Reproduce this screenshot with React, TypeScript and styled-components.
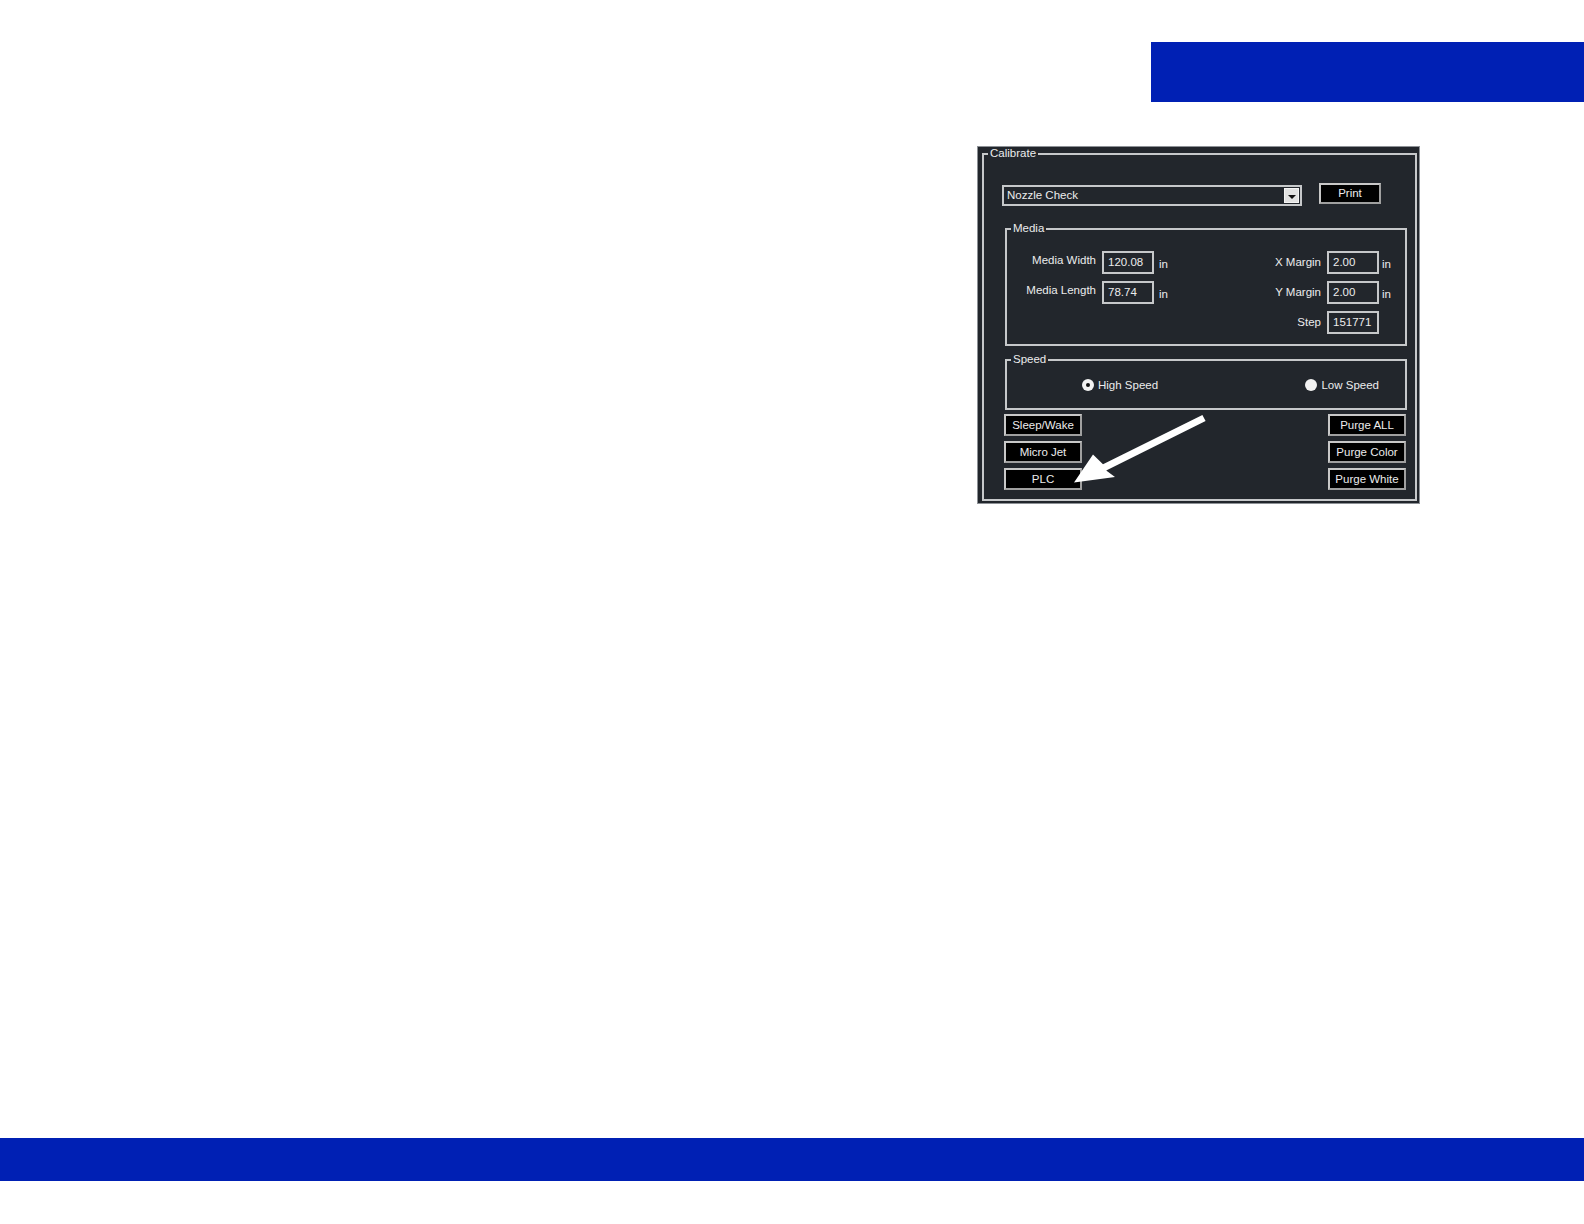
import React from 'react';
import styled, { createGlobalStyle } from 'styled-components';

const GlobalStyle = createGlobalStyle`
  html, body {
    margin: 0;
    padding: 0;
    background: #ffffff;
  }
  body {
    font-family: "Liberation Sans", Arial, sans-serif;
  }
`;

const PANEL_BG = '#22262c';
const LINE = '#c6c8ca';
const TEXT = '#ececec';
const BLUE = '#0020b4';

const Page = styled.div`
  width: 1584px;
  min-height: 1224px;
  display: flex;
  flex-direction: column;
`;

const TopBand = styled.header`
  padding-top: 42px;
  display: flex;
  justify-content: flex-end;
`;

const BlueTab = styled.div`
  width: 433px;
  height: 60px;
  background: ${BLUE};
`;

const Stage = styled.main`
  margin-top: 44px;
  padding-left: 977px;
`;

const Panel = styled.div`
  position: relative;
  width: 443px;
  box-sizing: border-box;
  padding: 0 2px 2px 4px;
  background: ${PANEL_BG};
  border: 1px solid #8d9196;
  font-size: 11.5px;
  line-height: 13px;
  color: ${TEXT};
`;

const GroupBox = styled.fieldset<{ $width?: number; $mt?: number; $ml?: number }>`
  margin: ${({ $mt }) => $mt ?? 0}px 0 0 ${({ $ml }) => $ml ?? 0}px;
  padding: 0;
  min-width: 0;
  width: ${({ $width }) => ($width ? `${$width}px` : 'auto')};
  box-sizing: border-box;
  border: 2px solid ${LINE};
`;

const Legend = styled.legend`
  margin-left: 4px;
  padding: 0 2px;
  font-size: 11.5px;
  line-height: 13px;
  color: ${TEXT};
`;

const GroupBody = styled.div<{ $pad: string }>`
  padding: ${({ $pad }) => $pad};
`;

const TopRow = styled.div`
  display: flex;
  align-items: flex-start;
  margin-top: 23px;
`;

const Select = styled.div`
  margin: 2px 0 0 -2px;
  width: 300px;
  height: 21px;
  box-sizing: border-box;
  border: 2px solid ${LINE};
  display: flex;
  align-items: center;
  justify-content: space-between;
  padding: 0 1px 0 3px;
`;

const SelectText = styled.span`
  color: ${TEXT};
`;

const SelectArrow = styled.span`
  width: 15px;
  height: 15px;
  box-sizing: border-box;
  background: #e2e2e2;
  border: 1px solid #f4f4f4;
  display: flex;
  align-items: center;
  justify-content: center;
  &::after {
    content: '';
    border-left: 4px solid transparent;
    border-right: 4px solid transparent;
    border-top: 4px solid #111;
    margin-top: 2px;
  }
`;

const PushButton = styled.div<{ $width: number }>`
  width: ${({ $width }) => $width}px;
  height: 22px;
  box-sizing: border-box;
  background: #000;
  border: 2px solid #c8c8c8;
  border-right-color: #a0a0a0;
  border-bottom-color: #a0a0a0;
  color: ${TEXT};
  display: flex;
  align-items: center;
  justify-content: center;
  white-space: nowrap;
`;

const PrintButton = styled(PushButton)`
  margin-left: 17px;
  height: 21px;
`;

const MediaBody = styled.div`
  display: flex;
  justify-content: space-between;
  padding: 16px 8px 10px 15px;
`;

const FieldGrid = styled.div<{ $labelWidth: number; $unitGap: number }>`
  display: grid;
  grid-template-columns: ${({ $labelWidth }) => $labelWidth}px 52px 12px;
  grid-auto-rows: 23px;
  column-gap: 6px;
  row-gap: 7px;
  align-items: center;
  & > :nth-child(3n) {
    margin-left: ${({ $unitGap }) => $unitGap - 6}px;
  }
`;

const FieldLabel = styled.span<{ $lift?: number }>`
  text-align: right;
  white-space: nowrap;
  padding-bottom: ${({ $lift }) => $lift ?? 0}px;
`;

const Field = styled.div`
  height: 23px;
  box-sizing: border-box;
  border: 2px solid ${LINE};
  padding: 0 4px;
  display: flex;
  align-items: center;
  color: ${TEXT};
`;

const Unit = styled.span`
  padding-top: 4px;
`;

const SpeedRow = styled.div`
  display: flex;
  align-items: center;
  padding: 12px 26px 16px 75px;
  height: 14px;
`;

const RadioOption = styled.label<{ $push?: boolean }>`
  display: flex;
  align-items: center;
  gap: 4px;
  margin-left: ${({ $push }) => ($push ? 'auto' : '0')};
`;

const RadioMark = styled.span<{ $checked?: boolean }>`
  width: 12px;
  height: 12px;
  border-radius: 50%;
  background: #f2f2f2;
  display: flex;
  align-items: center;
  justify-content: center;
  &::after {
    content: '';
    width: 4px;
    height: 4px;
    border-radius: 50%;
    background: ${({ $checked }) => ($checked ? '#111' : 'transparent')};
  }
`;

const ButtonColumns = styled.div`
  display: flex;
  justify-content: space-between;
  margin-top: 4px;
`;

const ButtonStack = styled.div`
  display: flex;
  flex-direction: column;
  gap: 5px;
`;

const ArrowOverlay = styled.svg`
  position: absolute;
  left: 0;
  top: 0;
  pointer-events: none;
`;

const Footer = styled.footer`
  margin-top: 634px;
  height: 43px;
  background: ${BLUE};
`;

const leftFields = [
  { label: 'Media Width', value: '120.08', unit: 'in' },
  { label: 'Media Length', value: '78.74', unit: 'in' },
];

const rightFields = [
  { label: 'X Margin', value: '2.00', unit: 'in' },
  { label: 'Y Margin', value: '2.00', unit: 'in' },
  { label: 'Step', value: '151771', unit: '' },
];

const leftButtons = ['Sleep/Wake', 'Micro Jet', 'PLC'];
const rightButtons = ['Purge ALL', 'Purge Color', 'Purge White'];

export default function App() {
  return (
    <Page>
      <GlobalStyle />
      <TopBand>
        <BlueTab />
      </TopBand>

      <Stage>
        <Panel>
          <GroupBox>
            <Legend>Calibrate</Legend>
            <GroupBody $pad="0 9px 9px 20px">
              <TopRow>
                <Select>
                  <SelectText>Nozzle Check</SelectText>
                  <SelectArrow />
                </Select>
                <PrintButton $width={62}>Print</PrintButton>
              </TopRow>

              <GroupBox $width={402} $mt={16} $ml={1}>
                <Legend>Media</Legend>
                <MediaBody>
                  <FieldGrid $labelWidth={74} $unitGap={5}>
                    {leftFields.map((f) => (
                      <React.Fragment key={f.label}>
                        <FieldLabel $lift={4}>{f.label}</FieldLabel>
                        <Field>{f.value}</Field>
                        <Unit>{f.unit}</Unit>
                      </React.Fragment>
                    ))}
                  </FieldGrid>
                  <FieldGrid $labelWidth={60} $unitGap={3}>
                    {rightFields.map((f) => (
                      <React.Fragment key={f.label}>
                        <FieldLabel>{f.label}</FieldLabel>
                        <Field>{f.value}</Field>
                        <Unit>{f.unit}</Unit>
                      </React.Fragment>
                    ))}
                  </FieldGrid>
                </MediaBody>
              </GroupBox>

              <GroupBox $width={402} $mt={7} $ml={1}>
                <Legend>Speed</Legend>
                <SpeedRow>
                  <RadioOption>
                    <RadioMark $checked />
                    High Speed
                  </RadioOption>
                  <RadioOption $push>
                    <RadioMark />
                    Low Speed
                  </RadioOption>
                </SpeedRow>
              </GroupBox>

              <ButtonColumns>
                <ButtonStack>
                  {leftButtons.map((b) => (
                    <PushButton key={b} $width={78}>
                      {b}
                    </PushButton>
                  ))}
                </ButtonStack>
                <ButtonStack>
                  {rightButtons.map((b) => (
                    <PushButton key={b} $width={78}>
                      {b}
                    </PushButton>
                  ))}
                </ButtonStack>
              </ButtonColumns>
            </GroupBody>
          </GroupBox>

          <ArrowOverlay width="443" height="358" viewBox="0 0 443 358">
            <polygon
              points="224.4,267.9 125,317.2 115,307.5 96,335.5 137,330 128.2,323.4 227.6,274.1"
              fill="#ffffff"
            />
          </ArrowOverlay>
        </Panel>
      </Stage>

      <Footer />
    </Page>
  );
}
